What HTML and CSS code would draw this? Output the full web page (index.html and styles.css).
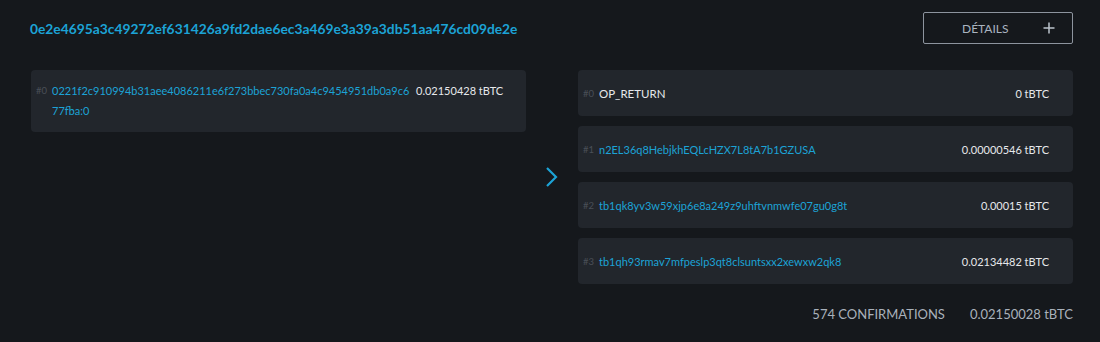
FILE: index.html
```html
<!DOCTYPE html>
<html lang="fr">
<head>
    <meta charset="UTF-8">
    <meta name="viewport" content="width=device-width, initial-scale=1.0">
    <title>Transaction</title>
    <link rel="stylesheet" href="styles.css">
</head>
<body>
    <div class="tx">
        <div class="tx-head">
            <a class="tx-hash" href="#">0e2e4695a3c49272ef631426a9fd2dae6ec3a469e3a39a3db51aa476cd09de2e</a>
            <button type="button" class="btn-details">
                <span>DÉTAILS</span>
                <svg class="icon-plus" width="12" height="12" viewBox="0 0 12 12">
                    <path d="M6 0.5v11M0.5 6h11" stroke="currentColor" stroke-width="1.5" fill="none"/>
                </svg>
            </button>
        </div>

        <div class="tx-body">
            <div class="tx-col">
                <div class="io io-input">
                    <span class="io-index">#0</span>
                    <a class="io-addr" href="#">0221f2c910994b31aee4086211e6f273bbec730fa0a4c9454951db0a9c677fba:0</a>
                    <span class="io-amount">0.02150428 tBTC</span>
                </div>
            </div>

            <div class="tx-arrow">
                <svg width="14" height="22" viewBox="0 0 14 22">
                    <polyline points="2,2 11,11 2,20" stroke="currentColor" stroke-width="2.2" fill="none"/>
                </svg>
            </div>

            <div class="tx-col">
                <div class="io">
                    <span class="io-index">#0</span>
                    <span class="io-addr plain">OP_RETURN</span>
                    <span class="io-amount">0 tBTC</span>
                </div>
                <div class="io">
                    <span class="io-index">#1</span>
                    <a class="io-addr" href="#">n2EL36q8HebjkhEQLcHZX7L8tA7b1GZUSA</a>
                    <span class="io-amount">0.00000546 tBTC</span>
                </div>
                <div class="io">
                    <span class="io-index">#2</span>
                    <a class="io-addr" href="#">tb1qk8yv3w59xjp6e8a249z9uhftvnmwfe07gu0g8t</a>
                    <span class="io-amount">0.00015 tBTC</span>
                </div>
                <div class="io">
                    <span class="io-index">#3</span>
                    <a class="io-addr" href="#">tb1qh93rmav7mfpeslp3qt8clsuntsxx2xewxw2qk8</a>
                    <span class="io-amount">0.02134482 tBTC</span>
                </div>
            </div>
        </div>

        <div class="tx-foot">
            <span class="confirmations">574 CONFIRMATIONS</span>
            <span class="total">0.02150028 tBTC</span>
        </div>
    </div>
</body>
</html>
```

FILE: styles.css
```css
body {
    margin: 0;
    font-family: 'Lato', 'Liberation Sans', sans-serif;
    background-color: #15181c;
    color: #e6e8eb;
}

a {
    text-decoration: none;
    color: #1ca3d6;
}

.tx {
    padding: 12px 27px 0 31px;
}

.tx-head {
    display: flex;
    align-items: center;
    justify-content: space-between;
    height: 32px;
}

    .tx-hash {
        font-size: 13.8px;
        font-weight: 700;
        margin-left: -1px;
    }

.btn-details {
    display: flex;
    align-items: center;
    width: 150px;
    height: 32px;
    padding: 0 17px 0 38px;
    background: transparent;
    border: 1px solid #8d949e;
    border-radius: 2px;
    color: #aab4c0;
    font-family: inherit;
    font-size: 12px;
    cursor: pointer;
}

    .btn-details .icon-plus {
        margin-left: auto;
        color: #bcc3cc;
    }

.tx-body {
    display: grid;
    grid-template-columns: minmax(0, 1fr) 52px minmax(0, 1fr);
    margin-top: 26px;
}

.tx-col {
    display: flex;
    flex-direction: column;
    gap: 10px;
}

.io {
    display: flex;
    align-items: center;
    height: 46px;
    padding: 0 24px 0 5px;
    background-color: #22262c;
    border-radius: 4px;
    font-size: 11px;
}

    .io-input {
        align-items: flex-start;
        height: auto;
        padding-top: 11px;
        padding-bottom: 11px;
        padding-right: 22px;
        line-height: 20px;
    }

.io-index {
    width: 16px;
    flex-shrink: 0;
    color: #4a4f57;
    font-size: 9.5px;
}

.io-addr {
    flex: 1;
    word-break: break-all;
}

    .io-addr.plain {
        color: #e6e8eb;
        font-size: 11.5px;
    }

.io-amount {
    white-space: nowrap;
    color: #e6e8eb;
}

.io-input .io-addr {
    flex: 0 0 358px;
}

.io-input .io-amount {
    margin-left: 6px;
}

.tx-arrow {
    display: flex;
    align-items: center;
    justify-content: center;
    color: #1ca3d6;
}

.tx-foot {
    display: flex;
    justify-content: flex-end;
    gap: 25px;
    margin-top: 20px;
    font-size: 13px;
    line-height: 20px;
    color: #a9b1bb;
}
```
